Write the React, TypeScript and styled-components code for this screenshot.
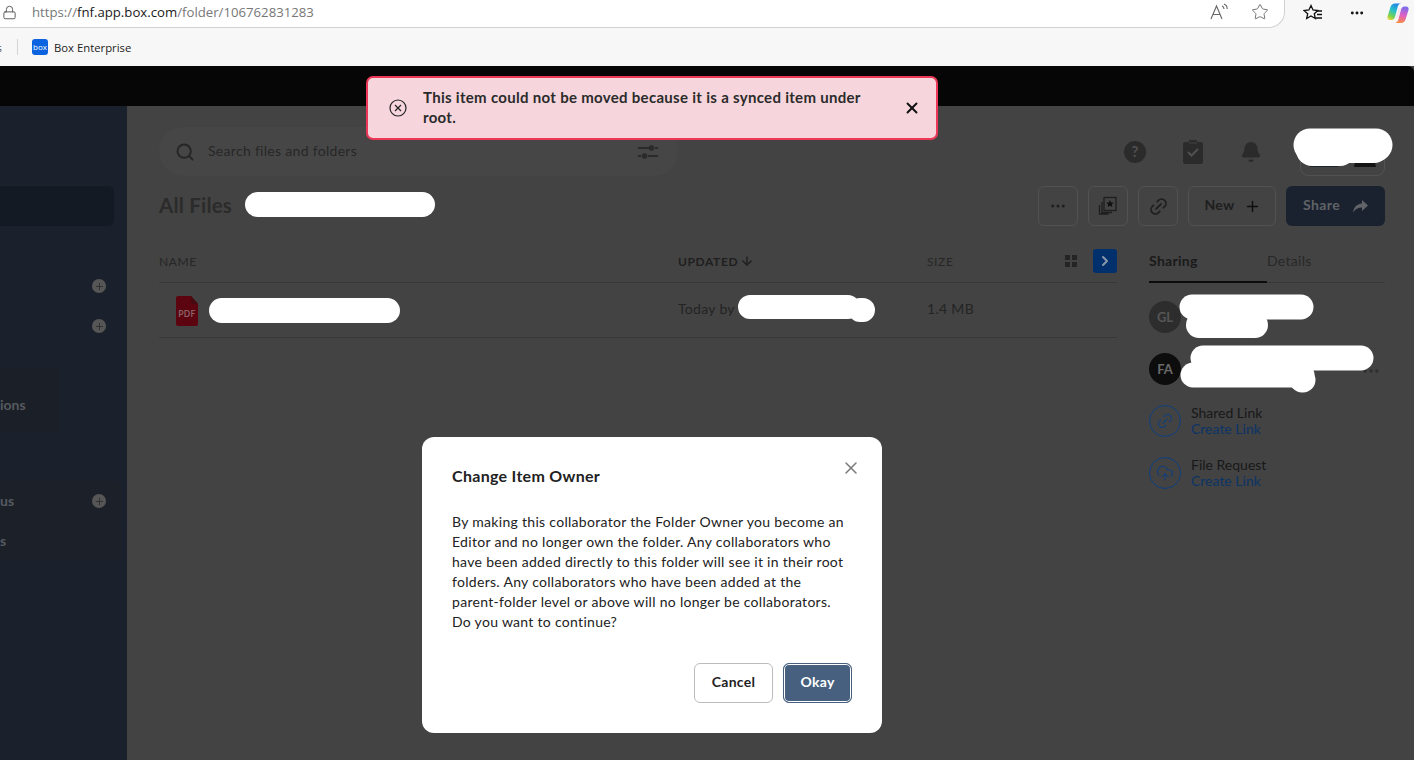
import styled, { createGlobalStyle } from "styled-components";
import { Bell, ChevronRight, Link2, Lock, Search, Star, X, Ellipsis, Plus, ArrowDown, CloudUpload } from "lucide-react";

const GlobalStyle = createGlobalStyle`
  html, body { margin: 0; padding: 0; height: 100%; overflow: hidden; background: #434343; }
  * { box-sizing: border-box; }
  body { font-family: Lato, "Open Sans", sans-serif; }
`;

const Page = styled.div`
  width: 1414px;
  height: 760px;
  position: relative;
  overflow: hidden;
  display: flex;
  flex-direction: column;
`;

/* browser chrome */
const AddressRow = styled.div`
  height: 28px;
  background: #f7f7f7;
  display: flex;
  align-items: flex-start;
`;

const AddressBar = styled.div`
  width: 1285px;
  height: 28px;
  background: #fff;
  border: 1px solid #d2d2d2;
  border-width: 0 1px 1px 0;
  border-bottom-right-radius: 16px;
  display: flex;
  align-items: center;
  padding: 0 15px 3px 2px;
  color: #555;
`;

const Url = styled.div`
  font-family: "Open Sans", sans-serif;
  font-size: 13.2px;
  margin-left: 15px;
  flex: 1;
  color: #777;
  white-space: nowrap;
  b { font-weight: 400; color: #1a1a1a; }
`;

const ChromeIcons = styled.div`
  display: flex;
  align-items: center;
  gap: 21px;
  color: #555;
`;

const ReadAloud = styled.svg`
  width: 20px;
  height: 18px;
`;

const RightIcons = styled.div`
  flex: 1;
  height: 26px;
  display: flex;
  align-items: center;
  color: #111;
  padding-left: 18px;
  gap: 26px;
`;

const CopilotMark = styled.svg`
  width: 22px;
  height: 22px;
  margin-left: -4px;
`;

const BookmarkRow = styled.div`
  height: 38px;
  background: #f7f7f7;
  display: flex;
  align-items: center;
  font-family: "Open Sans", sans-serif;
  font-size: 11.3px;
  color: #222;
`;

const ClippedBookmark = styled.span`
  width: 2px;
  overflow: hidden;
  direction: rtl;
  color: #555;
`;

const Separator = styled.span`
  width: 1px;
  height: 16px;
  background: #d4d4d4;
  margin: 0 14px 0 15px;
`;

const BoxFavicon = styled.span`
  width: 16px;
  height: 16px;
  border-radius: 3px;
  background: #0b63e0;
  color: #fff;
  font-size: 8px;
  line-height: 16px;
  text-align: center;
  font-weight: 400;
  margin-right: 6px;
`;

const BlackBar = styled.div`
  height: 40px;
  background: #060606;
  border-top-right-radius: 6px;
`;

/* dimmed app */
const AppBody = styled.div`
  flex: 1;
  display: flex;
  min-height: 0;
`;

const Sidebar = styled.aside`
  width: 127px;
  background: #1a212c;
  color: #565a60;
  font-size: 14px;
  font-weight: 700;
  overflow: hidden;
`;

const NavItem = styled.div<{ $top?: number; $active?: boolean; $tint?: boolean }>`
  height: 40px;
  width: ${(p) => (p.$active ? "114px" : "122px")};
  margin-top: ${(p) => p.$top ?? 0}px;
  padding: 0 15px 0 0;
  border-radius: 0 6px 6px 0;
  display: flex;
  align-items: center;
  justify-content: space-between;
  background: ${(p) => (p.$active ? "#141a23" : p.$tint ? "#1b2029" : "transparent")};
`;

const NavBand = styled.div`
  width: 60px;
  height: 64px;
  margin-top: 22px;
  padding-top: 11px;
  background: #1b1f27;
  display: flex;
  align-items: center;
`;

const NavLabel = styled.span`
  margin-top: -2px;
`;

const NavPlus = styled.span`
  width: 14px;
  height: 14px;
  margin-left: auto;
  margin-right: 1px;
  border-radius: 50%;
  background: #565656;
  color: #2f2f2f;
  display: flex;
  align-items: center;
  justify-content: center;
`;

const Main = styled.main`
  flex: 1;
  background: #434343;
  padding: 21px 29px 0 32px;
  color: #262626;
`;

const TopRow = styled.div`
  display: flex;
  align-items: center;
  height: 49px;
`;

const SearchBox = styled.div`
  width: 519px;
  height: 49px;
  border-radius: 24px;
  background: #464646;
  display: flex;
  align-items: center;
  padding: 0 20px 0 16px;
  color: #262626;
  font-size: 14px;
  letter-spacing: 0.3px;
  span { margin: -2px 0 0 13px; flex: 1; }
`;

const TopIcons = styled.div`
  margin-left: auto;
  display: flex;
  align-items: center;
  gap: 37px;
  color: #2b2b2b;
`;

const UserPill = styled.div`
  width: 85px;
  height: 36px;
  margin: 12px 0 0 1px;
  padding-bottom: 8px;
  border: 1px solid #525252;
  border-radius: 8px;
  display: flex;
  align-items: flex-end;
  justify-content: space-around;
  overflow: hidden;
  i { width: 30px; height: 10px; border-radius: 2px; background: #1d2531; }
  i + i { width: 22px; background: #141414; border-radius: 11px 11px 0 0; }
`;

const TitleRow = styled.div`
  display: flex;
  align-items: center;
  margin-top: 10px;
  height: 40px;
`;

const Title = styled.h1`
  margin: 0 13px 3px 0;
  font-size: 20.5px;
  font-weight: 700;
  color: #2b2b2b;
  letter-spacing: 0.2px;
`;

const TitleBlob = styled.div`
  width: 190px;
  height: 25px;
  margin-bottom: 3px;
  border-radius: 13px;
  background: #fff;
`;

const Actions = styled.div`
  margin-left: auto;
  display: flex;
  gap: 10px;
`;

const IconButton = styled.button`
  width: 40px;
  height: 40px;
  border: 1px solid #525252;
  border-radius: 6px;
  background: transparent;
  color: #1e1e1e;
  padding: 0;
  display: flex;
  align-items: center;
  justify-content: center;
`;

const NewButton = styled(IconButton)`
  width: 88px;
  gap: 9px;
  font: 700 14px Lato, sans-serif;
  letter-spacing: 0.3px;
  color: #1e1e1e;
  span { margin: -3px 0 0 1px; }
`;

const ShareButton = styled(IconButton)`
  width: 99px;
  gap: 13px;
  border: 0;
  background: #1a2230;
  color: #606367;
  font: 700 14px Lato, sans-serif;
  letter-spacing: 0.4px;
  span { margin-top: -3px; }
`;

const Columns = styled.div`
  display: flex;
  gap: 32px;
  margin-top: 14px;
`;

const Table = styled.section`
  width: 958px;
`;

const HeaderRow = styled.div`
  height: 43px;
  border-bottom: 1px solid #383838;
  display: grid;
  grid-template-columns: 519px 249px 1fr 24px;
  align-items: center;
  font-size: 12px;
  letter-spacing: 0.6px;
  color: #262626;
`;

const SortLabel = styled.div`
  display: flex;
  align-items: center;
  gap: 2px;
  font-weight: 700;
  color: #1f1f1f;
`;

const SizeHead = styled.div`
  display: flex;
  justify-content: space-between;
  align-items: center;
  padding-right: 16px;
`;

const GridIcon = styled.span`
  width: 12px;
  height: 12px;
  display: grid;
  grid-template-columns: 5px 5px;
  grid-template-rows: 5px 5px;
  gap: 2px;
  i { background: #242424; }
`;

const ToggleButton = styled.span`
  width: 24px;
  height: 24px;
  border-radius: 3px;
  background: #02306c;
  color: #8b98aa;
  display: flex;
  align-items: center;
  justify-content: center;
`;

const FileRow = styled.div`
  height: 55px;
  border-bottom: 1px solid #383838;
  display: grid;
  grid-template-columns: 519px 249px 1fr;
  align-items: center;
  font-size: 14px;
  letter-spacing: 0.3px;
  color: #242424;
`;

const NameCell = styled.div`
  display: flex;
  align-items: center;
  padding: 1px 0 0 17px;
  gap: 11px;
`;

const NameBlob = styled.div`
  width: 191px;
  height: 25px;
  border-radius: 13px;
  background: #fff;
`;

const UpdatedCell = styled.div`
  display: flex;
  align-items: center;
  gap: 3px;
  padding-bottom: 4px;
  white-space: nowrap;
`;

const SizeCell = styled.div`
  padding-bottom: 4px;
`;

const UpdatedBlob = styled.svg`
  width: 140px;
  height: 30px;
  flex: none;
`;

const Panel = styled.section`
  width: 236px;
  position: relative;
`;

const Tabs = styled.div`
  display: flex;
  height: 43px;
  border-bottom: 1px solid #383838;
  font-size: 14px;
  letter-spacing: 0.3px;
`;

const Tab = styled.div<{ $active?: boolean }>`
  width: 118px;
  line-height: 41px;
  height: 43px;
  font-weight: ${(p) => (p.$active ? 700 : 400)};
  color: ${(p) => (p.$active ? "#1a1a1a" : "#282828")};
  border-bottom: 2px solid ${(p) => (p.$active ? "#0c0c0c" : "transparent")};
`;

const PanelList = styled.div`
  display: flex;
  flex-direction: column;
  gap: 20px;
  margin-top: 18px;
`;

const PanelRow = styled.div`
  height: 32px;
  display: flex;
  align-items: center;
  gap: 10px;
`;

const Avatar = styled.div<{ $dark?: boolean }>`
  width: 32px;
  height: 32px;
  border-radius: 50%;
  background: ${(p) => (p.$dark ? "#0d0d0d" : "#2d2d2d")};
  color: ${(p) => (p.$dark ? "#6a6a6a" : "#555")};
  font-size: 13px;
  font-weight: 700;
  display: flex;
  align-items: center;
  justify-content: center;
`;

const RingIcon = styled.div`
  width: 32px;
  height: 32px;
  border-radius: 50%;
  border: 1px solid #0e3f80;
  color: #0e3f80;
  display: flex;
  align-items: center;
  justify-content: center;
`;

const LinkText = styled.div`
  font-size: 14px;
  line-height: 16px;
  color: #181818;
  a { display: block; color: #0b3467; }
`;

const Dots = styled.span`
  margin: 3px 4px 0 auto;
  color: #2e2e2e;
  display: flex;
`;

const Scribble = styled.svg`
  position: absolute;
  left: -10px;
  top: 44px;
  width: 250px;
  height: 120px;
  pointer-events: none;
`;

const AvatarScribble = styled.svg`
  position: absolute;
  left: 1286px;
  top: 124px;
  width: 112px;
  height: 46px;
`;

/* overlays */
const Toast = styled.div`
  position: absolute;
  left: 366px;
  top: 76px;
  width: 572px;
  height: 64px;
  background: #f6d6dc;
  border: 2px solid #ed3757;
  border-radius: 7px;
  display: flex;
  align-items: center;
  padding: 0 15px 0 21px;
  color: #2b2b2b;
  font-size: 15px;
  font-weight: 700;
  line-height: 20px;
  letter-spacing: 0.3px;
`;

const ToastText = styled.div`
  margin: -2px 0 0 16px;
  width: 450px;
  flex: none;
`;

const ToastClose = styled.span`
  margin-left: auto;
  display: flex;
  color: #111;
`;

const Modal = styled.div`
  position: absolute;
  left: 422px;
  top: 437px;
  width: 460px;
  height: 296px;
  background: #fff;
  border-radius: 12px;
  padding: 29px 30px 30px;
  display: flex;
  flex-direction: column;
  color: #222;
`;

const ModalHead = styled.div`
  display: flex;
  justify-content: space-between;
  align-items: flex-start;
`;

const ModalTitle = styled.h2`
  margin: 0;
  font-size: 16px;
  line-height: 20px;
  font-weight: 700;
  letter-spacing: 0.3px;
`;

const ModalClose = styled.span`
  display: flex;
  color: #7a7a7a;
  margin: -8px -9px 0 0;
`;

const ModalBody = styled.p`
  margin: 26px 0 0;
  font-size: 14px;
  line-height: 20px;
  letter-spacing: 0.3px;
`;

const ModalFooter = styled.div`
  margin-top: auto;
  display: flex;
  justify-content: flex-end;
  gap: 10px;
`;

const CancelButton = styled.button`
  width: 79px;
  height: 40px;
  border: 1px solid #bcbcbc;
  border-radius: 6px;
  background: #fff;
  color: #222;
  padding: 0 0 3px;
  font: 700 14px Lato, sans-serif;
  letter-spacing: 0.3px;
`;

const OkayButton = styled.button`
  width: 69px;
  height: 40px;
  border: 1px solid #47607f;
  box-shadow: inset 0 0 0 1px #fff;
  border-radius: 6px;
  background: #47607f;
  color: #fff;
  padding: 0 0 3px;
  font: 700 14px Lato, sans-serif;
  letter-spacing: 0.3px;
`;

function CopilotLogo() {
  return (
    <CopilotMark viewBox="0 0 22 22">
      <defs>
        <linearGradient id="copA" x1="0.7" y1="0" x2="0.2" y2="1">
          <stop offset="0" stopColor="#1e7fe8" />
          <stop offset="0.45" stopColor="#27c2c9" />
          <stop offset="0.8" stopColor="#7fd24a" />
          <stop offset="1" stopColor="#e5d63a" />
        </linearGradient>
        <linearGradient id="copB" x1="0.6" y1="0" x2="0.4" y2="1">
          <stop offset="0" stopColor="#7a6cf0" />
          <stop offset="0.55" stopColor="#e45fc0" />
          <stop offset="1" stopColor="#f78c3c" />
        </linearGradient>
      </defs>
      <path d="M8 1.500h6.500c-2 0-3.200 1.200-3.800 3.200L8 15c-.6 2-1.800 3-3.500 3H3c-2 0-3-1.500-2.500-3.500L3.500 5C4.200 2.700 5.800 1.500 8 1.500z" fill="url(#copA)" />
      <path d="M14 21H7.500c2 0 3.200-1.200 3.800-3.200L14 7.500c.6-2 1.800-3 3.500-3H19c2 0 3 1.500 2.500 3.500L18.500 17.500C17.800 19.800 16.200 21 14 21z" fill="url(#copB)" />
      <path d="M11.500 6.500l2.500-.5-2.500 10-2.500.5z" fill="#fbe6ef" />
    </CopilotMark>
  );
}

function FavoritesIcon() {
  return (
    <svg width="20" height="18" viewBox="0 0 20 18" fill="none" stroke="#111" strokeWidth="1.300">
      <path d="M8 1.500l2 4.500 4.800.5-3.500 3.200 1 4.800L8 12l-4.300 2.500 1-4.800L1 6.500 5.900 6z" />
      <path d="M13 7h6M14 10.500h5M13 14h6" />
    </svg>
  );
}

function PdfIcon() {
  return (
    <svg width="22" height="30" viewBox="0 0 22 30">
      <path d="M2 0h13l7 8v20a2 2 0 0 1-2 2H2a2 2 0 0 1-2-2V2a2 2 0 0 1 2-2z" fill="#5c0510" />
      <path d="M15 0l7 8h-5a2 2 0 0 1-2-2z" fill="#460a10" />
      <text x="11" y="21" textAnchor="middle" fontSize="8.500" fontWeight="700" fill="#8a6266" fontFamily="Lato, sans-serif">PDF</text>
    </svg>
  );
}

function HelpIcon() {
  return (
    <svg width="22" height="22" viewBox="0 0 22 22">
      <circle cx="11" cy="11" r="11" fill="#2b2b2b" />
      <text x="11" y="16" textAnchor="middle" fontSize="15" fontWeight="700" fill="#505050" fontFamily="Lato, sans-serif">?</text>
    </svg>
  );
}

function TaskIcon() {
  return (
    <svg width="20" height="24" viewBox="0 0 20 24">
      <path d="M2 2h4V0h8v2h4a2 2 0 0 1 2 2v18a2 2 0 0 1-2 2H2a2 2 0 0 1-2-2V4a2 2 0 0 1 2-2z" fill="#2b2b2b" />
      <path d="M5 12l3.500 3.500L15 9" stroke="#505050" strokeWidth="2" fill="none" />
      <path d="M6 3h8" stroke="#444" strokeWidth="1" />
    </svg>
  );
}

function FilterIcon() {
  return (
    <svg width="20" height="14" viewBox="0 0 20 14" fill="#2a2a2a">
      <rect x="0" y="2" width="11" height="2" />
      <circle cx="13.500" cy="3" r="2.800" />
      <rect x="17" y="2" width="3" height="2" />
      <rect x="0" y="10" width="3" height="2" />
      <circle cx="6.500" cy="11" r="2.800" />
      <rect x="10" y="10" width="10" height="2" />
    </svg>
  );
}

function CollectionIcon() {
  return (
    <svg width="20" height="20" viewBox="0 0 20 20" fill="none" stroke="#1e1e1e" strokeWidth="1.300">
      <rect x="6" y="1.500" width="12" height="13" />
      <path d="M4 6v10.500h10M1.500 9v9h9" />
      <path d="M12 4l1.100 2.400 2.600.3-1.900 1.700.5 2.600-2.300-1.300-2.300 1.300.5-2.600-1.900-1.700 2.600-.3z" fill="#111" stroke="none" />
    </svg>
  );
}

function ShareArrow() {
  return (
    <svg width="15" height="13" viewBox="0 0 15 13">
      <path d="M9 0l6 5.500L9 11V7.500C5 7.500 2.500 9 0 12.500 .8 7.500 3.500 4 9 3.500z" fill="#606367" />
    </svg>
  );
}

export default function App() {
  return (
    <Page>
      <GlobalStyle />
      <AddressRow>
        <AddressBar>
          <Lock size={15} color="#555" strokeWidth={1.5} />
          <Url>https://<b>fnf.app.box.com</b>/folder/106762831283</Url>
          <ChromeIcons>
            <ReadAloud viewBox="0 0 20 18" fill="none" stroke="#666" strokeWidth="1.100">
              <path d="M1 16L6.500 3 12 16M3 11.500h7" />
              <path d="M12 3c1.500.5 2 1.500 2 3M14 1c2 .8 3.200 2.500 3.200 5" />
            </ReadAloud>
            <Star size={18} strokeWidth={1.2} color="#666" />
          </ChromeIcons>
        </AddressBar>
        <RightIcons>
          <FavoritesIcon />
          <Ellipsis size={16} strokeWidth={2.4} />
          <CopilotLogo />
        </RightIcons>
      </AddressRow>
      <BookmarkRow>
        <ClippedBookmark>s</ClippedBookmark>
        <Separator />
        <BoxFavicon>box</BoxFavicon>
        Box Enterprise
      </BookmarkRow>
      <BlackBar />
      <AppBody>
        <Sidebar>
          <NavItem $active $top={80} />
          <NavItem $top={40}><NavPlus><Plus size={11} /></NavPlus></NavItem>
          <NavItem><NavPlus><Plus size={11} /></NavPlus></NavItem>
          <NavBand><NavLabel>ions</NavLabel></NavBand>
          <NavItem $top={49} $tint><NavLabel>us</NavLabel><NavPlus><Plus size={11} /></NavPlus></NavItem>
          <NavItem $tint><NavLabel>s</NavLabel></NavItem>
        </Sidebar>
        <Main>
          <TopRow>
            <SearchBox>
              <Search size={20} strokeWidth={2.4} />
              <span>Search files and folders</span>
              <FilterIcon />
            </SearchBox>
            <TopIcons>
              <HelpIcon />
              <TaskIcon />
              <Bell size={22} fill="#2b2b2b" />
              <UserPill><i /><i /></UserPill>
            </TopIcons>
          </TopRow>
          <TitleRow>
            <Title>All Files</Title>
            <TitleBlob />
            <Actions>
              <IconButton><Ellipsis size={18} /></IconButton>
              <IconButton><CollectionIcon /></IconButton>
              <IconButton><Link2 size={21} transform="rotate(-45)" /></IconButton>
              <NewButton><span>New</span><Plus size={17} strokeWidth={2} color="#0e0e0e" /></NewButton>
              <ShareButton><span>Share</span><ShareArrow /></ShareButton>
            </Actions>
          </TitleRow>
          <Columns>
            <Table>
              <HeaderRow>
                <div>NAME</div>
                <SortLabel>UPDATED<ArrowDown size={14} strokeWidth={2.4} /></SortLabel>
                <SizeHead>
                  <span>SIZE</span>
                  <GridIcon><i /><i /><i /><i /></GridIcon>
                </SizeHead>
                <ToggleButton><ChevronRight size={16} strokeWidth={3} /></ToggleButton>
              </HeaderRow>
              <FileRow>
                <NameCell>
                  <PdfIcon />
                  <NameBlob />
                </NameCell>
                <UpdatedCell>
                  Today by
                  <UpdatedBlob viewBox="0 0 140 30">
                    <path d="M12 14H110M122 17H125" stroke="#fff" strokeWidth="24" strokeLinecap="round" fill="none" />
                  </UpdatedBlob>
                </UpdatedCell>
                <SizeCell>1.4 MB</SizeCell>
              </FileRow>
            </Table>
            <Panel>
              <Tabs>
                <Tab $active>Sharing</Tab>
                <Tab>Details</Tab>
              </Tabs>
              <PanelList>
                <PanelRow>
                  <Avatar>GL</Avatar>
                </PanelRow>
                <PanelRow>
                  <Avatar $dark>FA</Avatar>
                  <Dots><Ellipsis size={20} /></Dots>
                </PanelRow>
                <PanelRow>
                  <RingIcon><Link2 size={18} strokeWidth={1.4} transform="rotate(-45)" /></RingIcon>
                  <LinkText>Shared Link<a>Create Link</a></LinkText>
                </PanelRow>
                <PanelRow>
                  <RingIcon><CloudUpload size={18} strokeWidth={1.4} /></RingIcon>
                  <LinkText>File Request<a>Create Link</a></LinkText>
                </PanelRow>
              </PanelList>
              <Scribble viewBox="0 0 250 120" fill="none" stroke="#fff" strokeLinecap="round">
                <path d="M53 23H162" strokeWidth="25" />
                <path d="M60 41H116" strokeWidth="26" />
                <path d="M64 74H222" strokeWidth="25" />
                <path d="M54 91H163" strokeWidth="25" />
                <path d="M163 96h1" strokeWidth="25" />
              </Scribble>
            </Panel>
          </Columns>
        </Main>
      </AppBody>

      <AvatarScribble viewBox="0 0 112 46" fill="none" stroke="#fff" strokeLinecap="round">
        <path d="M24 21H90" strokeWidth="33" />
        <path d="M26 26H54" strokeWidth="32" />
        <path d="M54 23H88" strokeWidth="32" />
      </AvatarScribble>

      <Toast>
        <svg width="18" height="18" viewBox="0 0 18 18" fill="none" stroke="#222" strokeWidth="1.200">
          <circle cx="9" cy="9" r="8" />
          <path d="M6 6l6 6M12 6l-6 6" />
        </svg>
        <ToastText>This item could not be moved because it is a synced item under root.</ToastText>
        <ToastClose><X size={18} strokeWidth={2.6} /></ToastClose>
      </Toast>

      <Modal>
        <ModalHead>
          <ModalTitle>Change Item Owner</ModalTitle>
          <ModalClose><X size={20} strokeWidth={1.8} /></ModalClose>
        </ModalHead>
        <ModalBody>
          By making this collaborator the Folder Owner you become an Editor and no longer own the folder. Any collaborators who have been added directly to this folder will see it in their root folders. Any collaborators who have been added at the parent-folder level or above will no longer be collaborators. Do you want to continue?
        </ModalBody>
        <ModalFooter>
          <CancelButton>Cancel</CancelButton>
          <OkayButton>Okay</OkayButton>
        </ModalFooter>
      </Modal>
    </Page>
  );
}
